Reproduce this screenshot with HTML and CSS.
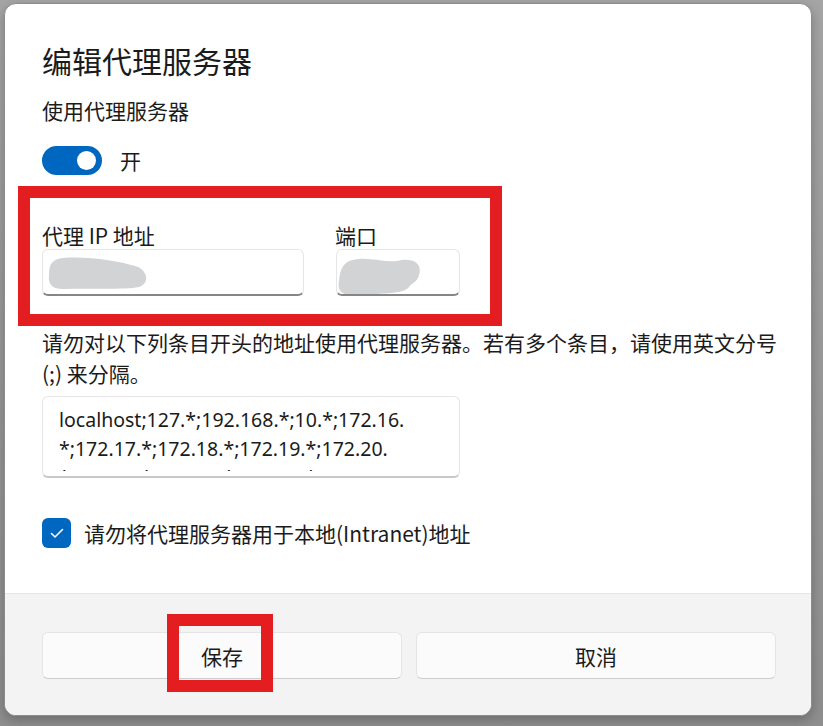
FILE: index.html
```html
<!DOCTYPE html>
<html lang="zh-CN">
<head>
    <meta charset="UTF-8">
    <meta name="viewport" content="width=device-width, initial-scale=1.0">
    <title>编辑代理服务器</title>
    <link rel="stylesheet" href="styles.css">
</head>
<body>
    <div class="dialog">
        <div class="dialog-body">
            <h1 class="title">编辑代理服务器</h1>
            <p class="caption">使用代理服务器</p>

            <div class="toggle-row">
                <span class="toggle"><span class="knob"></span></span>
                <span>开</span>
            </div>

            <div class="fields">
                <div class="field field-ip">
                    <label>代理 IP 地址</label>
                    <div class="input">
                        <svg class="smear" width="110" height="44" viewBox="0 0 110 44">
                            <path d="M20 5 C45 3 75 8 92 13 C104 16 108 30 96 34 C80 37 50 35 20 36 C8 36 5 30 6 22 C6 10 10 6 20 5 Z" fill="#d2d3d5"/>
                        </svg>
                    </div>
                </div>
                <div class="field field-port">
                    <label>端口</label>
                    <div class="input">
                        <svg class="smear" width="90" height="46" viewBox="0 0 90 46">
                            <path d="M12 8 C30 2 45 10 60 8 C75 4 86 10 82 22 C80 30 74 30 72 34 C66 42 40 40 20 42 C4 44 0 36 2 28 C3 20 4 12 12 8 Z" fill="#d2d3d5"/>
                        </svg>
                    </div>
                </div>
                <div class="mark mark-fields"></div>
            </div>

            <p class="hint">请勿对以下列条目开头的地址使用代理服务器。若有多个条目，请使用英文分号 (;) 来分隔。</p>

            <div class="textarea">
                <div class="textarea-text">
                    <div>localhost;127.*;192.168.*;10.*;172.16.</div>
                    <div>*;172.17.*;172.18.*;172.19.*;172.20.</div>
                    <div>*;172.21.*;172.22.*;172.23.*;172.24.</div>
                </div>
            </div>

            <div class="check-row">
                <span class="checkbox">
                    <svg width="16" height="16" viewBox="0 0 16 16">
                        <path d="M2.5 8.5 L6 12 L13.5 4.5" fill="none" stroke="#fff" stroke-width="1.6" stroke-linecap="round" stroke-linejoin="round"/>
                    </svg>
                </span>
                <span>请勿将代理服务器用于本地(Intranet)地址</span>
            </div>
        </div>

        <div class="dialog-footer">
            <button class="btn btn-save">保存<span class="mark mark-save"></span></button>
            <button class="btn">取消</button>
        </div>
    </div>
</body>
</html>
```

FILE: styles.css
```css
* {
    margin: 0;
    padding: 0;
    box-sizing: border-box;
}
body {
    font-family: "Noto Sans CJK SC", "Noto Sans", sans-serif;
    color: #1b1b1b;
    background: linear-gradient(#a5a5a5, #8e8e8f);
    height: 726px;
    overflow: hidden;
    padding: 3px 0 0 4px;
}
.dialog {
    width: 808px;
    height: 713px;
    background-color: #ffffff;
    border: 1px solid #8c8c8c;
    border-radius: 12px;
    overflow: hidden;
    display: flex;
    flex-direction: column;
    box-shadow: 0 4px 12px rgba(0, 0, 0, 0.25);
}
.dialog-body {
    flex: 1;
    padding: 36px 28px 0 37px;
}
.title {
    font-size: 30px;
    font-weight: 400;
    line-height: 40px;
}
.caption {
    font-size: 21px;
    line-height: 30px;
    margin-top: 15px;
}
.toggle-row {
    display: flex;
    align-items: center;
    gap: 18px;
    margin-top: 20px;
    height: 30px;
    font-size: 21px;
}
.toggle {
    width: 60px;
    height: 29px;
    border-radius: 15px;
    background-color: #0067c0;
    display: flex;
    align-items: center;
    justify-content: flex-end;
    padding-right: 6px;
}
.knob {
    width: 19px;
    height: 19px;
    border-radius: 50%;
    background-color: #ffffff;
}
.fields {
    position: relative;
    display: flex;
    gap: 32px;
    margin-top: 46px;
}
.field label {
    display: block;
    font-size: 21px;
    line-height: 28px;
}
.field-ip {
    width: 262px;
}
.field-port {
    width: 124px;
}
.field-port label {
    margin-left: -1px;
}
.input {
    height: 47px;
    background-color: #ffffff;
    border: 1px solid #e6e6e6;
    border-bottom: 2px solid #868686;
    border-radius: 6px;
    overflow: hidden;
}
.smear {
    display: block;
    margin-top: 3px;
}
.mark {
    position: absolute;
    border: 12px solid #e41e20;
}
.mark-fields {
    left: -24px;
    top: -35px;
    width: 484px;
    height: 140px;
}
.hint {
    font-size: 21px;
    line-height: 31px;
    margin-top: 31px;
}
.textarea {
    width: 418px;
    height: 82px;
    margin-top: 7px;
    border: 1px solid #e6e6e6;
    border-bottom: 2px solid #c8c8c8;
    border-radius: 6px;
    padding: 8px 10px 0 16px;
}
.textarea-text {
    height: 66px;
    overflow: hidden;
    font-family: "Noto Sans", "Noto Sans CJK SC", sans-serif;
    font-size: 19.5px;
    line-height: 29px;
    white-space: nowrap;
}
.check-row {
    display: flex;
    align-items: center;
    gap: 13px;
    margin-top: 40px;
    font-size: 21px;
    line-height: 30px;
}
.checkbox {
    width: 29px;
    height: 30px;
    border-radius: 6px;
    background-color: #0067c0;
    display: flex;
    align-items: center;
    justify-content: center;
}
.checkbox svg {
    display: block;
}
.dialog-footer {
    height: 122px;
    background-color: #f3f3f3;
    border-top: 1px solid #e5e5e5;
    display: grid;
    grid-template-columns: 360px 360px;
    gap: 14px;
    padding: 38px 0 0 37px;
}
.btn {
    position: relative;
    height: 47px;
    font-family: inherit;
    font-size: 21px;
    color: #1b1b1b;
    background-color: #fbfbfb;
    border: 1px solid #e5e5e5;
    border-bottom-color: #cdcdcd;
    border-radius: 6px;
}
.mark-save {
    left: 124px;
    top: -19px;
    width: 106px;
    height: 78px;
}
```
